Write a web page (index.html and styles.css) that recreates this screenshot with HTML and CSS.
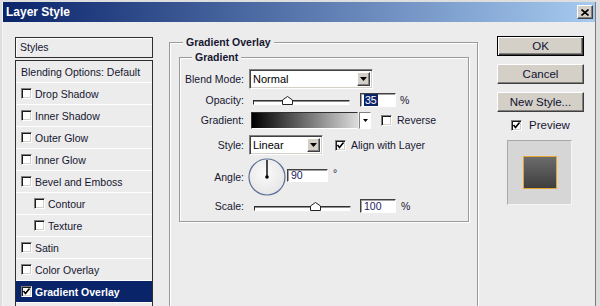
FILE: index.html
```html
<!DOCTYPE html>
<html lang="en">
<head>
<meta charset="UTF-8">
<meta name="viewport" content="width=device-width, initial-scale=1.0">
<title>Layer Style</title>
<link rel="stylesheet" href="styles.css">
</head>
<body>

<div class="window">
    <div class="titlebar">
        <span class="title">Layer Style</span>
        <span class="close-btn">
            <svg width="8" height="7" viewBox="0 0 8 7"><path d="M0.5 0.5 L7.5 6.5 M7.5 0.5 L0.5 6.5" stroke="#000" stroke-width="1.6"/></svg>
        </span>
    </div>

    <div class="client">
        <div class="styles-col">
            <div class="styles-head">Styles</div>
            <ul class="styles-list">
                <li>Blending Options: Default</li>
                <li><span class="cb"></span>Drop Shadow</li>
                <li><span class="cb"></span>Inner Shadow</li>
                <li><span class="cb"></span>Outer Glow</li>
                <li><span class="cb"></span>Inner Glow</li>
                <li><span class="cb"></span>Bevel and Emboss</li>
                <li class="sub"><span class="cb"></span>Contour</li>
                <li class="sub"><span class="cb"></span>Texture</li>
                <li><span class="cb"></span>Satin</li>
                <li><span class="cb"></span>Color Overlay</li>
                <li class="selected"><span class="cb"><svg width="9" height="9" viewBox="0 0 9 9"><path d="M1.5 4 L3.5 6.5 L7.5 1.5" fill="none" stroke="#000" stroke-width="1.6"/></svg></span>Gradient Overlay</li>
                <li></li>
            </ul>
        </div>

        <fieldset class="group outer-group">
            <legend>Gradient Overlay</legend>
            <fieldset class="group inner-group">
                <legend>Gradient</legend>

                <div class="row row-blend">
                    <span class="lbl">Blend Mode:</span>
                    <div class="select select-blend">
                        <span class="select-text">Normal</span>
                        <span class="drop"><svg width="7" height="4" viewBox="0 0 7 4"><path d="M0 0 H7 L3.5 4 Z" fill="#000"/></svg></span>
                    </div>
                </div>

                <div class="row row-opacity">
                    <span class="lbl">Opacity:</span>
                    <div class="slider">
                        <svg class="thumb" style="left: 35%;" width="11" height="9" viewBox="0 0 11 9"><path d="M0.5 8.5 V4 L5.5 0.5 L10.5 4 V8.5 Z" fill="#fff" stroke="#222"/></svg>
                    </div>
                    <span class="num"><span class="sel">35</span></span>
                    <span class="unit">%</span>
                </div>

                <div class="row row-gradient">
                    <span class="lbl">Gradient:</span>
                    <div class="grad-pick">
                        <span class="grad-bar"></span>
                        <span class="grad-arrow"><svg width="5" height="3" viewBox="0 0 5 3"><path d="M0 0 H5 L2.5 3 Z" fill="#000"/></svg></span>
                    </div>
                    <span class="cb cb-reverse"></span>
                    <span class="cb-text">Reverse</span>
                </div>

                <div class="row row-style">
                    <span class="lbl">Style:</span>
                    <div class="select select-style">
                        <span class="select-text">Linear</span>
                        <span class="drop"><svg width="7" height="4" viewBox="0 0 7 4"><path d="M0 0 H7 L3.5 4 Z" fill="#000"/></svg></span>
                    </div>
                    <span class="cb cb-align"><svg width="9" height="9" viewBox="0 0 9 9"><path d="M1.5 4 L3.5 6.5 L7.5 1.5" fill="none" stroke="#000" stroke-width="1.6"/></svg></span>
                    <span class="cb-text">Align with Layer</span>
                </div>

                <div class="row row-angle">
                    <span class="lbl">Angle:</span>
                    <svg class="dial" width="38" height="38" viewBox="0 0 38 38">
                        <defs>
                            <radialGradient id="dialFill" cx="0.45" cy="0.4" r="0.6">
                                <stop offset="0" stop-color="#fbfbfb"/>
                                <stop offset="1" stop-color="#e6e6e6"/>
                            </radialGradient>
                        </defs>
                        <circle cx="19" cy="19" r="18" fill="url(#dialFill)" stroke="#5c6f94" stroke-width="1.2"/>
                        <line x1="19" y1="19" x2="19" y2="2" stroke="#000" stroke-width="1.4"/>
                        <circle cx="19" cy="19" r="1.8" fill="#000"/>
                    </svg>
                    <span class="num num-angle">90</span>
                    <span class="deg">°</span>
                </div>

                <div class="row row-scale">
                    <span class="lbl">Scale:</span>
                    <div class="slider">
                        <svg class="thumb" style="left: 63%;" width="11" height="9" viewBox="0 0 11 9"><path d="M0.5 8.5 V4 L5.5 0.5 L10.5 4 V8.5 Z" fill="#fff" stroke="#222"/></svg>
                    </div>
                    <span class="num">100</span>
                    <span class="unit">%</span>
                </div>
            </fieldset>
        </fieldset>

        <div class="buttons-col">
            <button class="btn btn-default">OK</button>
            <button class="btn">Cancel</button>
            <button class="btn">New Style...</button>
            <div class="preview-check">
                <span class="cb"><svg width="9" height="9" viewBox="0 0 9 9"><path d="M1.5 4 L3.5 6.5 L7.5 1.5" fill="none" stroke="#000" stroke-width="1.6"/></svg></span>
                <span>Preview</span>
            </div>
            <div class="preview-box">
                <div class="swatch"></div>
            </div>
        </div>
    </div>
</div>

</body>
</html>
```

FILE: styles.css
```css
body {
    margin: 0;
    background: #dedede;
    font-family: "Liberation Sans", Arial, sans-serif;
    font-size: 10.5px;
    color: #161630;
    overflow: hidden;
}

.window {
    height: 304px;
    margin: 2px 4px 0 2px;
    border-left: 1px solid #f4f4f4;
    border-right: 1px solid #7c7c7c;
    background: #ececec;
    overflow: hidden;
}

/* title bar */

.titlebar {
    height: 20px;
    display: flex;
    align-items: center;
    justify-content: space-between;
    padding: 0 2px 0 3px;
    background: linear-gradient(to right, #0a246a, #a6caf0);
}

.title {
    color: #fff;
    font-weight: bold;
    font-size: 12px;
}

.close-btn {
    width: 16px;
    height: 14px;
    box-sizing: border-box;
    display: flex;
    align-items: center;
    justify-content: center;
    background: #d4d0c8;
    border: 1px solid;
    border-color: #fff #404040 #404040 #fff;
    box-shadow: inset -1px -1px #808080;
}

.client {
    display: flex;
    align-items: flex-start;
    padding-left: 12px;
}

/* styles list */

.styles-col {
    width: 138px;
    margin-top: 15px;
}

.styles-head {
    height: 19px;
    line-height: 19px;
    padding-left: 4px;
    border: 1px solid #2e2e2e;
    box-shadow: inset 1px 1px #fff;
}

.styles-list {
    list-style: none;
    margin: 2px 0 0;
    padding: 0;
    border: 1px solid #2e2e2e;
    border-bottom: none;
}

.styles-list li {
    height: 21px;
    display: flex;
    align-items: center;
    padding-left: 5px;
    border-bottom: 1px solid #fff;
    white-space: nowrap;
}

.styles-list li.sub {
    padding-left: 18px;
}

.styles-list li.selected {
    background: #0a246a;
    color: #fff;
    font-weight: bold;
}

.cb {
    width: 11px;
    height: 11px;
    box-sizing: border-box;
    flex-shrink: 0;
    display: inline-flex;
    align-items: center;
    justify-content: center;
    background: #fff;
    border: 1px solid;
    border-color: #808080 #fff #fff #808080;
    box-shadow: inset 1px 1px #1a1a1a, inset -1px -1px #d4d0c8;
}

.styles-list .cb {
    margin-right: 3px;
}

/* group boxes */

.group {
    margin: 0;
    border: 1px solid #9a9a9a;
    box-shadow: 1px 1px 0 #fff, inset 1px 1px 0 #fff;
}

.group legend {
    padding: 0 3px;
    font-weight: bold;
    line-height: 13px;
    background: #ececec;
}

.outer-group {
    width: 309px;
    height: 300px;
    box-sizing: border-box;
    margin: 14px 0 0 16px;
    padding: 2px 8px 0 9px;
}

.outer-group > legend {
    margin-left: 4px;
}

.inner-group {
    padding: 5px 0 6px;
}

.inner-group > legend {
    margin-left: 12px;
}

.row {
    display: flex;
    align-items: center;
    white-space: nowrap;
}

.lbl {
    width: 64px;
    text-align: right;
    margin-right: 5px;
    flex-shrink: 0;
}

.row-blend { height: 20px; }
.row-opacity { height: 20px; margin-top: 1px; }
.row-gradient { height: 18px; margin-top: 1px; }
.row-style { height: 22px; margin-top: 5px; }
.row-angle { height: 40px; margin-top: 1px; }
.row-scale { height: 18px; }

/* controls */

.select {
    display: flex;
    height: 20px;
    box-sizing: border-box;
    background: #fff;
    border: 1px solid;
    border-color: #808080 #fff #fff #808080;
    box-shadow: inset 1px 1px #404040, inset -1px -1px #d4d0c8;
}

.select-blend { width: 124px; }
.select-style { width: 74px; }

.select-text {
    flex: 1;
    padding-left: 3px;
    line-height: 18px;
    font-size: 11px;
    color: #000;
}

.drop {
    width: 13px;
    margin: 2px 2px 2px 0;
    box-sizing: border-box;
    display: flex;
    align-items: center;
    justify-content: center;
    background: #d4d0c8;
    border: 1px solid;
    border-color: #fff #404040 #404040 #fff;
    box-shadow: inset -1px -1px #808080;
}

.slider {
    position: relative;
    width: 97px;
    height: 5px;
    box-sizing: border-box;
    margin: 4px 0 0 4px;
    background: #fff;
    border: 1px solid;
    border-color: #303030 #e8e8e8 #fff #303030;
    box-shadow: inset 0 1px #909090;
}

.row-scale .slider {
    margin-left: 5px;
    margin-right: -1px;
}

.thumb {
    position: absolute;
    top: -5px;
    margin-left: -5px;
}

.num {
    width: 36px;
    height: 14px;
    box-sizing: border-box;
    margin-left: 10px;
    padding-left: 3px;
    line-height: 12px;
    background: #fff;
    color: #1a1a60;
    border: 1px solid;
    border-color: #404040 #fff #fff #404040;
    box-shadow: inset 1px 1px #a0a0a0;
}

.sel {
    display: inline-block;
    background: #0a246a;
    color: #fff;
    padding: 0 1px;
}

.num-angle {
    width: 41px;
    height: 13px;
    margin: 0 0 3px 1px;
    line-height: 11px;
}

.unit {
    margin-left: 4px;
}

.row-scale .unit {
    margin-left: 5px;
}

.deg {
    margin: 0 0 8px 5px;
}

.dial {
    margin-left: -1px;
}

.grad-pick {
    display: flex;
    width: 120px;
    height: 17px;
    margin-left: 2px;
}

.grad-bar {
    flex: 1;
    border: 1px solid;
    border-color: #303030 #d8d8d8 #fff #303030;
    background: linear-gradient(to right, #000, #dadada);
}

.grad-arrow {
    width: 10px;
    margin-left: 1px;
    display: flex;
    align-items: center;
    justify-content: center;
    background: #fff;
    border: 1px solid;
    border-color: #808080 #fff #fff #808080;
}

.cb-reverse {
    margin-left: 10px;
}

.cb-align {
    margin-left: 12px;
}

.cb-text {
    margin-left: 5px;
}

/* buttons */

.buttons-col {
    width: 87px;
    margin: 14px 0 0 19px;
}

.btn {
    display: block;
    width: 87px;
    height: 20px;
    margin-bottom: 8px;
    padding: 0;
    background: #d4d0c8;
    border: 1px solid;
    border-color: #fff #404040 #404040 #fff;
    box-shadow: inset -1px -1px #808080;
    font-family: "Liberation Sans", Arial, sans-serif;
    font-size: 11.5px;
    color: #101030;
}

.btn-default {
    border-color: #000;
    box-shadow: inset 1px 1px #fff, inset -1px -1px #404040, inset -2px -2px #808080;
}

.preview-check {
    display: flex;
    align-items: center;
    height: 12px;
    margin: -1px 0 0 14px;
    font-size: 11.5px;
}

.preview-check span + span {
    margin-left: 7px;
}

.preview-box {
    width: 65px;
    height: 65px;
    box-sizing: border-box;
    margin: 9px 0 0 10px;
    display: flex;
    align-items: center;
    justify-content: center;
    background: #d6d6d6;
    border: 1px solid;
    border-color: #a8a8a8 #f4f4f4 #f4f4f4 #a8a8a8;
}

.swatch {
    width: 34px;
    height: 33px;
    box-sizing: border-box;
    border: 1px solid #e6a233;
    background: linear-gradient(#6c6c6c, #3e3e3e);
}
```
